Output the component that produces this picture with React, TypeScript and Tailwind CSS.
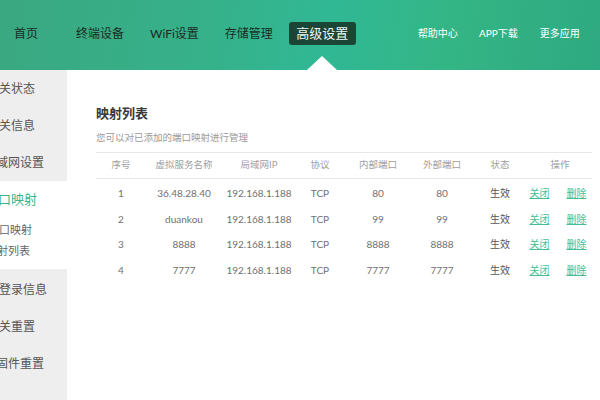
import React from "react";

const rows = [
  ["1", "36.48.28.40", "192.168.1.188", "TCP", "80", "80"],
  ["2", "duankou", "192.168.1.188", "TCP", "99", "99"],
  ["3", "8888", "192.168.1.188", "TCP", "8888", "8888"],
  ["4", "7777", "192.168.1.188", "TCP", "7777", "7777"],
];

const cols = "grid grid-cols-[50px_76px_74px_48px_68px_60px_56px_64px]";

export default function App() {
  return (
    <div className="w-[600px] h-[400px] overflow-hidden bg-white flex flex-col font-['Lato','Noto_Sans_CJK_SC',sans-serif]">
      {/* header */}
      <div className="relative h-[70px] shrink-0 bg-[linear-gradient(100deg,#3aa881_0%,#36b18a_35%,#30b894_55%,#34b585_75%,#2ea981_100%)]">
        <div className="flex items-center h-[67px] text-[#1d2b24]">
          <span className="ml-[14px] text-[12px]">首页</span>
          <span className="ml-[38px] text-[12px]">终端设备</span>
          <span className="ml-[26px] text-[12px]">WiFi设置</span>
          <span className="ml-[26px] text-[12px]">存储管理</span>
          <span className="ml-[16px] w-[67px] h-[23px] rounded-[3px] bg-[#1b4636] text-[#eef7f2] text-[13px] flex items-center justify-center">
            高级设置
          </span>
          <span className="ml-[62px] text-[10px] text-white">帮助中心</span>
          <span className="ml-[21px] text-[10px] text-white">APP下载</span>
          <span className="ml-[22px] text-[10px] text-white">更多应用</span>
        </div>
        <div className="absolute left-[307px] top-[56px] w-0 h-0 border-l-[15px] border-r-[15px] border-b-[14px] border-l-transparent border-r-transparent border-b-white" />
      </div>

      {/* body */}
      <div className="flex flex-1 min-h-0">
        {/* sidebar */}
        <div className="w-[67px] shrink-0 overflow-hidden flex flex-col whitespace-nowrap">
          <div className="bg-[#eeeeee] text-[#555] text-[12px]">
            <div className="h-[37px] flex items-center"><span className="-ml-[13px]">网关状态</span></div>
            <div className="h-[37px] flex items-center"><span className="-ml-[13px]">网关信息</span></div>
            <div className="h-[37px] flex items-center"><span className="-ml-[16px]">局域网设置</span></div>
          </div>
          <div className="bg-white h-[88px] flex flex-col">
            <div className="h-[38px] flex items-center text-[13px] text-[#3cb58b]"><span className="-ml-[15px]">端口映射</span></div>
            <div className="h-[22px] flex items-center text-[11px] text-[#666]"><span className="-ml-[12px]">端口映射</span></div>
            <div className="h-[21px] flex items-center text-[11px] text-[#666]"><span className="-ml-[14px]">映射列表</span></div>
          </div>
          <div className="bg-[#eeeeee] flex-1 pt-[2px] text-[#555] text-[12px]">
            <div className="h-[37px] flex items-center"><span className="-ml-[25px]">修改登录信息</span></div>
            <div className="h-[37px] flex items-center"><span className="-ml-[13px]">网关重置</span></div>
            <div className="h-[37px] flex items-center"><span className="-ml-[4px]">固件重置</span></div>
          </div>
        </div>

        {/* content */}
        <div className="flex-1 pl-[29px] pr-[8px] pt-[33px]">
          <div className="text-[13px] leading-[20px] font-semibold text-[#3a3a3a]">映射列表</div>
          <div className="mt-[8px] text-[9.5px] leading-[14px] text-[#9a9a9a]">您可以对已添加的端口映射进行管理</div>
          <div className="mt-[7px] w-[496px]">
            <div className={`${cols} h-[27px] items-center border-t border-b border-[#e8e8e8] text-[9.5px] text-[#a0a0a0] text-center`}>
              <span>序号</span>
              <span>虚拟服务名称</span>
              <span>局域网IP</span>
              <span>协议</span>
              <span>内部端口</span>
              <span>外部端口</span>
              <span>状态</span>
              <span>操作</span>
            </div>
            <div className="pt-[2px]">
              {rows.map((r) => (
                <div key={r[0]} className={`${cols} h-[25.5px] items-center text-[10px] text-[#707070] text-center`}>
                  {r.map((c, i) => (
                    <span key={i}>{c}</span>
                  ))}
                  <span className="text-[#555]">生效</span>
                  <span className="flex justify-center gap-[17px] pr-[4px] text-[#45be93]">
                    <span className="underline">关闭</span>
                    <span className="underline">删除</span>
                  </span>
                </div>
              ))}
            </div>
          </div>
        </div>
      </div>
    </div>
  );
}
